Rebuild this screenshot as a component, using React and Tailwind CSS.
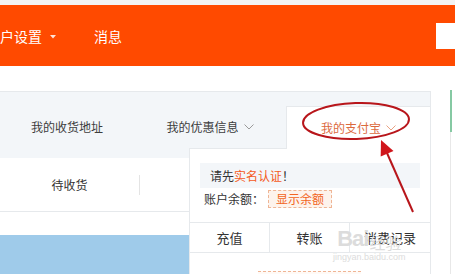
import React from "react";

function Chevron({ color = "#9a9a9a" }) {
  return (
    <svg width="10" height="6" viewBox="0 0 10 6" className="ml-[5px]">
      <path d="M0.5 0.5 L5 5 L9.5 0.5" fill="none" stroke={color} strokeWidth="1" />
    </svg>
  );
}

export default function App() {
  return (
    <div className="relative w-[455px] h-[274px] overflow-hidden bg-white font-['Noto_Sans_CJK_SC',sans-serif]">
      <div className="h-[5px] bg-[#f3f3f3]" />
      <div className="h-[61px] bg-[#ff4a00] flex items-center text-white text-[14px]">
        <span className="leading-none">户设置</span>
        <svg width="6" height="4" viewBox="0 0 6 4" className="ml-[8px] mt-[2px]">
          <path d="M0 0 L6 0 L3 3.5 Z" fill="#ffe3d6" />
        </svg>
        <span className="ml-[38px] leading-none">消息</span>
        <div className="ml-auto w-[19px] h-[26px] bg-white" />
      </div>

      <div className="flex">
        <div className="relative w-[431px] pt-[25px]">
          {/* tab bar */}
          <div className="h-[67px] border-t border-r border-[#e6e9ec] bg-[#f3f6f9] flex items-start pt-[14px] text-[12px] text-[#3d3d3d]">
            <div className="w-[134px] h-[42px] flex items-center justify-center">我的收货地址</div>
            <div className="w-[152px] h-[42px] flex items-center justify-center">
              我的优惠信息
              <Chevron />
            </div>
            <div className="flex-1 h-[43px] bg-white border-l border-t border-[#e6e9ec] flex items-center justify-center text-[#dc6a3e]">
              我的支付宝
              <Chevron color="#e9a283" />
            </div>
          </div>

          {/* order status row */}
          <div className="h-[54px] border-b border-[#e6e9ec] flex items-center text-[12px] text-[#333]">
            <div className="w-[139px] flex justify-center">待收货</div>
            <div className="w-px h-[20px] bg-[#e4e4e4]" />
          </div>
          <div className="h-[23px]" />
          <div className="h-[40px] bg-[#9fcbea]" />

          {/* dropdown panel */}
          <div className="absolute left-[189px] top-[82px] w-[242px] h-[200px] bg-white border-l border-r border-[#e6e9ec] text-[12px]">
            <div className="h-px w-[97px] bg-[#e6e9ec]" />
            <div className="ml-[10px] mr-[10px] mt-[14px] h-[25px] bg-[#f3f6f9] flex items-center pl-[10px] text-[#333]">
              请先<span className="text-[#f55a1c]">实名认证</span>！
            </div>
            <div className="h-[22px] flex items-center pl-[14px] text-[#333]">
              账户余额：
              <div className="ml-[4px] w-[64px] h-[18px] border border-dashed border-[#efb595] bg-[#fdf3ec] flex items-center justify-center text-[#f26522]">
                显示余额
              </div>
            </div>
            <div className="mt-[12px] h-[31px] border-t border-b border-[#e6e9ec] grid grid-cols-3 text-[13px] text-[#333]">
              <div className="flex items-center justify-center border-r border-[#e6e9ec]">充值</div>
              <div className="flex items-center justify-center border-r border-[#e6e9ec]">转账</div>
              <div className="flex items-center justify-center">消费记录</div>
            </div>
            <div className="ml-[68px] mt-[18px] w-[103px] h-[10px] border-t border-dashed border-[#efb595] bg-[#fffaf6]" />
          </div>
        </div>

        {/* right strip */}
        <div className="flex-1 flex justify-end pr-[3px]">
          <div className="mt-[24px] w-[2px] flex flex-col">
            <div className="h-[42px] bg-[#86c9a3]" />
            <div className="flex-1 w-px bg-[#e8e8e8]" />
          </div>
        </div>
      </div>

      {/* watermark */}
      <div className="absolute left-[333px] top-[228px] flex flex-col items-center text-[#dcdcdc] pointer-events-none">
        <div className="flex items-end leading-none">
          <span className="text-[22px] font-bold font-['Liberation_Sans',sans-serif] tracking-[-1px]">Bai</span>
          <span className="text-[16px] ml-[1px]">经验</span>
        </div>
        <span className="text-[9px] leading-none mt-[3px] font-['Liberation_Sans',sans-serif]">jingyan.baidu.com</span>
      </div>

      {/* red annotation */}
      <svg className="absolute left-0 top-0 pointer-events-none" width="455" height="274" viewBox="0 0 455 274">
        <ellipse cx="356" cy="121" rx="53" ry="18" fill="none" stroke="#b8161b" strokeWidth="2" transform="rotate(-2 356 121)" />
        <line x1="413" y1="212" x2="387" y2="153" stroke="#b8161b" strokeWidth="2" />
        <polygon points="381,140 393.5,151 380.7,156.5" fill="#d0151b" />
      </svg>
    </div>
  );
}
